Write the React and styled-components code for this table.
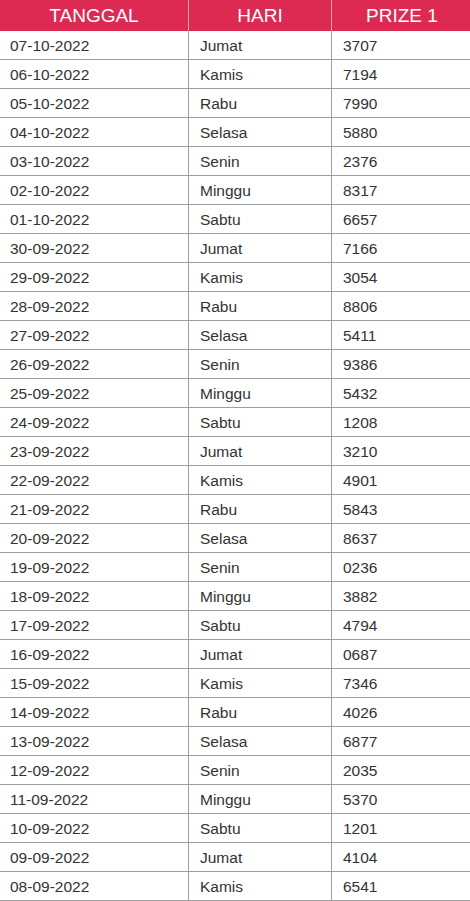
import React from "react";
import styled, { createGlobalStyle } from "styled-components";

const rows = [
  ["07-10-2022", "Jumat", "3707"],
  ["06-10-2022", "Kamis", "7194"],
  ["05-10-2022", "Rabu", "7990"],
  ["04-10-2022", "Selasa", "5880"],
  ["03-10-2022", "Senin", "2376"],
  ["02-10-2022", "Minggu", "8317"],
  ["01-10-2022", "Sabtu", "6657"],
  ["30-09-2022", "Jumat", "7166"],
  ["29-09-2022", "Kamis", "3054"],
  ["28-09-2022", "Rabu", "8806"],
  ["27-09-2022", "Selasa", "5411"],
  ["26-09-2022", "Senin", "9386"],
  ["25-09-2022", "Minggu", "5432"],
  ["24-09-2022", "Sabtu", "1208"],
  ["23-09-2022", "Jumat", "3210"],
  ["22-09-2022", "Kamis", "4901"],
  ["21-09-2022", "Rabu", "5843"],
  ["20-09-2022", "Selasa", "8637"],
  ["19-09-2022", "Senin", "0236"],
  ["18-09-2022", "Minggu", "3882"],
  ["17-09-2022", "Sabtu", "4794"],
  ["16-09-2022", "Jumat", "0687"],
  ["15-09-2022", "Kamis", "7346"],
  ["14-09-2022", "Rabu", "4026"],
  ["13-09-2022", "Selasa", "6877"],
  ["12-09-2022", "Senin", "2035"],
  ["11-09-2022", "Minggu", "5370"],
  ["10-09-2022", "Sabtu", "1201"],
  ["09-09-2022", "Jumat", "4104"],
  ["08-09-2022", "Kamis", "6541"],
];

const GlobalStyle = createGlobalStyle`
  body {
    margin: 0;
    background: #fff;
    font-family: "Liberation Sans", Arial, sans-serif;
  }
`;

const Table = styled.table`
  width: 470px;
  table-layout: fixed;
  border-collapse: collapse;
  border-spacing: 0;
`;

const HeadCell = styled.th`
  width: ${(p) => p.w}px;
  height: 30px;
  padding: 1px 0 0;
  background: #dd2a52;
  color: #fff;
  font-size: 19px;
  font-weight: normal;
  text-align: center;
  vertical-align: middle;
  border-right: ${(p) => (p.last ? "none" : "1px solid #d9a3b2")};
`;

const Cell = styled.td`
  height: 27px;
  padding: 1px 0 0 ${(p) => (p.first ? 10 : 11)}px;
  color: #333;
  font-size: 15.5px;
  line-height: 18px;
  text-align: left;
  vertical-align: middle;
  border-bottom: 1px solid #9e9e9e;
  border-right: ${(p) => (p.last ? "none" : "1px solid #9e9e9e")};
  white-space: nowrap;
`;

export default function App() {
  return (
    <>
      <GlobalStyle />
      <Table>
        <thead>
          <tr>
            <HeadCell w={188}>TANGGAL</HeadCell>
            <HeadCell w={142}>HARI</HeadCell>
            <HeadCell w={140} last>
              PRIZE 1
            </HeadCell>
          </tr>
        </thead>
        <tbody>
          {rows.map(([date, day, prize]) => (
            <tr key={date}>
              <Cell first>{date}</Cell>
              <Cell>{day}</Cell>
              <Cell last>{prize}</Cell>
            </tr>
          ))}
        </tbody>
      </Table>
    </>
  );
}
